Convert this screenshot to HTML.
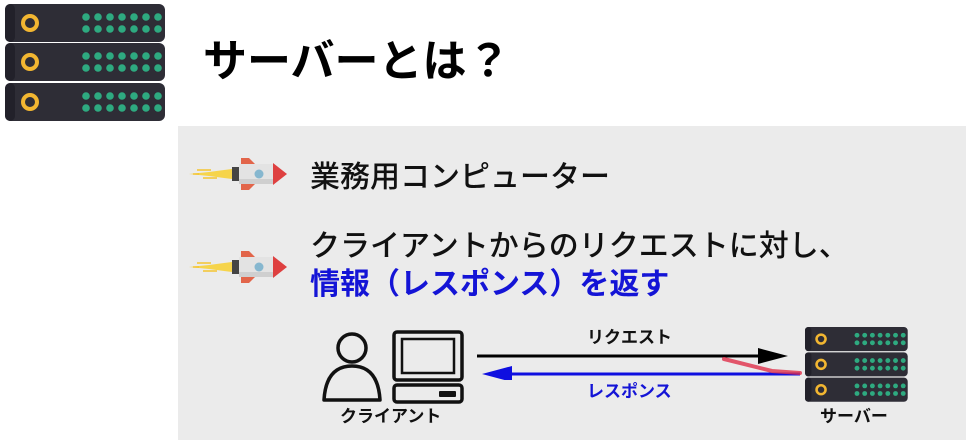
<!DOCTYPE html>
<html><head><meta charset="utf-8"><style>
body{margin:0;width:966px;height:440px;overflow:hidden;background:#fff;position:relative;font-family:"Liberation Sans","Noto Sans CJK JP",sans-serif;}
.panel{position:absolute;left:178px;top:126px;width:788px;height:314px;background:#ebebeb;}
.t{position:absolute;white-space:nowrap;font-weight:bold;line-height:1;}
svg{position:absolute;}
</style></head><body>
<svg width="0" height="0" style="position:absolute">
<defs>
<g id="srow">
<rect x="0" y="0" width="160" height="38" rx="6" fill="#2e2d36"/>
<rect x="0" y="0" width="10" height="38" rx="5" fill="#22212a"/>
<circle cx="25" cy="19" r="7" fill="none" stroke="#f2b631" stroke-width="4"/>
<g fill="#2eaa80">
<circle cx="81" cy="13" r="3.8"/><circle cx="93" cy="13" r="3.8"/><circle cx="105" cy="13" r="3.8"/><circle cx="117" cy="13" r="3.8"/><circle cx="129" cy="13" r="3.8"/><circle cx="141" cy="13" r="3.8"/><circle cx="153" cy="13" r="3.8"/>
<circle cx="81" cy="25" r="3.8"/><circle cx="93" cy="25" r="3.8"/><circle cx="105" cy="25" r="3.8"/><circle cx="117" cy="25" r="3.8"/><circle cx="129" cy="25" r="3.8"/><circle cx="141" cy="25" r="3.8"/><circle cx="153" cy="25" r="3.8"/>
</g>
</g>
<g id="rocket">
<path d="M0 16 L20 14 L35 12 L43 11 L43 21 L35 20 L20 18 Z" fill="#f7d23a" opacity="0.9"/>
<path d="M8 12h14M14 20h14M4 16h6" stroke="#f4c430" stroke-width="1.5"/>
<rect x="43" y="9" width="7" height="14" fill="#444"/>
<path d="M52 0 L60 0 L66 6 L52 6 Z" fill="#e2654a"/>
<path d="M52 26 L66 26 L60 32 L52 32 Z" fill="#e2654a"/>
<rect x="50" y="6" width="34" height="20" fill="#e3e3e3"/>
<rect x="50" y="21" width="34" height="5" fill="#cfcfcf"/>
<circle cx="70" cy="16" r="4.5" fill="#86b7cf"/>
<path d="M84 5 L98 16 L84 27 Z" fill="#de4040"/>
</g>
</defs>
</svg>

<svg style="left:5px;top:4px" width="162" height="120" viewBox="0 0 162 120">
<use href="#srow" y="0"/><use href="#srow" y="39"/><use href="#srow" y="79"/>
</svg>

<div class="t" style="left:203px;top:40px;font-size:44px;color:#000;">サーバーとは？</div>
<div class="panel"></div>

<svg style="left:189px;top:158px" width="100" height="34" viewBox="0 0 100 34"><use href="#rocket"/></svg>
<svg style="left:189px;top:251px" width="100" height="34" viewBox="0 0 100 34"><use href="#rocket"/></svg>

<div class="t" style="left:310px;top:163px;font-size:30px;color:#111;font-weight:500">業務用コンピューター</div>
<div class="t" style="left:310px;top:232px;font-size:30px;color:#111;font-weight:500">クライアントからのリクエストに対し、</div>
<div class="t" style="left:310px;top:270px;font-size:30px;color:#1414d6;">情報（レスポンス）を返す</div>

<svg style="left:318px;top:328px" width="160" height="80" viewBox="0 0 160 80">
<circle cx="34" cy="20" r="14" fill="none" stroke="#111" stroke-width="3.5"/>
<path d="M6 72 Q8 38 34 38 Q60 38 62 72 Z" fill="none" stroke="#111" stroke-width="3.5" stroke-linejoin="round"/>
<rect x="76" y="4" width="68" height="48" rx="3" fill="none" stroke="#111" stroke-width="3.5"/>
<rect x="84" y="11" width="52" height="34" fill="none" stroke="#111" stroke-width="2.5"/>
<rect x="76" y="57" width="68" height="17" rx="3" fill="none" stroke="#111" stroke-width="3.5"/>
<rect x="121" y="63" width="17" height="6" rx="1" fill="#111"/>
</svg>

<svg style="left:470px;top:340px" width="340" height="40" viewBox="0 0 340 40">
<line x1="7" y1="16" x2="290" y2="16" stroke="#000" stroke-width="3"/>
<path d="M288 8 L318 16 L288 24 Z" fill="#000"/>
<line x1="40" y1="34" x2="330" y2="34" stroke="#0f0fe0" stroke-width="3"/>
<path d="M42 26 L12 34 L42 42 Z" fill="#0f0fe0"/>
<path d="M254 19 L302 31 L330 33" stroke="#e0304a" stroke-width="4" fill="none" stroke-linecap="round" opacity="0.8"/>
</svg>

<div class="t" style="left:587px;top:329px;font-size:17px;color:#111;">リクエスト</div>
<div class="t" style="left:587px;top:383px;font-size:17px;color:#1414d6;">レスポンス</div>
<div class="t" style="left:340px;top:408px;font-size:17px;color:#111;">クライアント</div>
<div class="t" style="left:820px;top:408px;font-size:17px;color:#111;">サーバー</div>

<svg style="left:805px;top:327px" width="104" height="76" viewBox="0 0 162 120" preserveAspectRatio="none">
<use href="#srow" y="0"/><use href="#srow" y="40"/><use href="#srow" y="80"/>
</svg>
</body></html>
